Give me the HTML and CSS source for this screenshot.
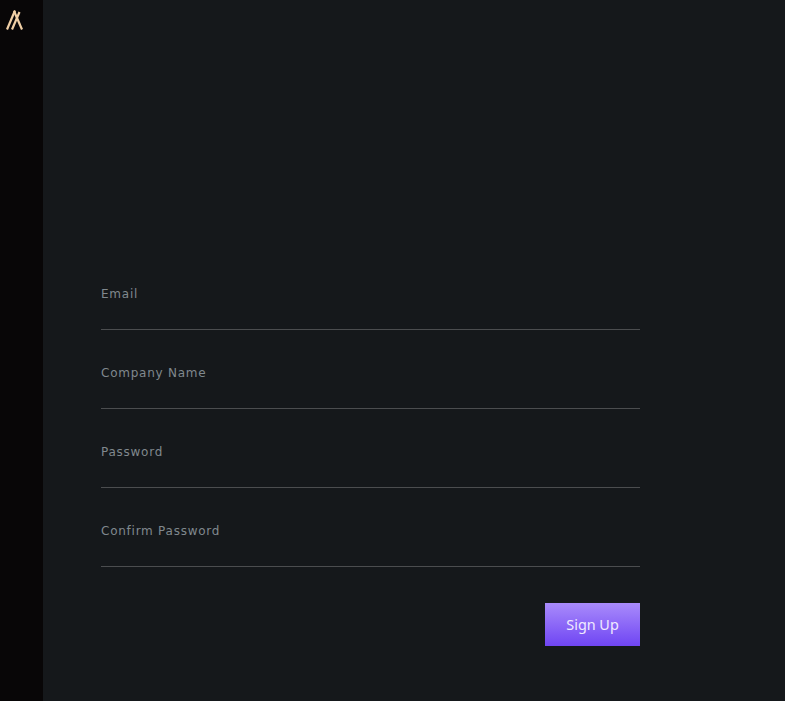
FILE: index.html
```html
<!DOCTYPE html>
<html lang="en">
<head>
<meta charset="utf-8">
<title>Sign Up</title>
<link rel="stylesheet" href="styles.css">
</head>
<body>
<div class="app">
  <aside class="rail">
    <svg class="logo" width="18" height="22" viewBox="0 0 18 22" fill="none" stroke="#f0cfa6" stroke-width="2.2">
      <path d="M1 20.5L9 1.5"/>
      <path d="M6 20.5L13.5 3"/>
      <path d="M8 2L16 20.5"/>
    </svg>
  </aside>
  <main class="main">
    <form class="form">
      <label class="field"><span class="label">Email</span></label>
      <label class="field"><span class="label">Company Name</span></label>
      <label class="field"><span class="label">Password</span></label>
      <label class="field"><span class="label">Confirm Password</span></label>
      <div class="actions"><button type="button" class="btn">Sign Up</button></div>
    </form>
  </main>
</div>
</body>
</html>
```
FILE: styles.css
```css
* { box-sizing: border-box; }
html, body { margin: 0; height: 100%; }
body { background: #15181b; }
.app { display: flex; height: 701px; overflow: hidden; }
.rail { width: 43px; flex: none; background: #080607; padding: 9px 0 0 6px; }
.logo { display: block; }
.main { flex: 1; padding: 285px 0 0 58px; }
.form { width: 539px; display: flex; flex-direction: column; }
.field { display: block; height: 45px; border-bottom: 1px solid #4b4d4f; margin-bottom: 34px; }
.label { display: block; font: 12px/19px "DejaVu Sans", sans-serif; letter-spacing: 0.75px; color: #80888e; }
.actions { display: flex; justify-content: flex-end; margin-top: 2px; }
.btn { width: 95px; height: 43px; border: 0; padding: 0; background: linear-gradient(#a98bfb, #6f45f3); color: #f0eaff; font: 14.4px "Noto Sans", sans-serif; }
```
